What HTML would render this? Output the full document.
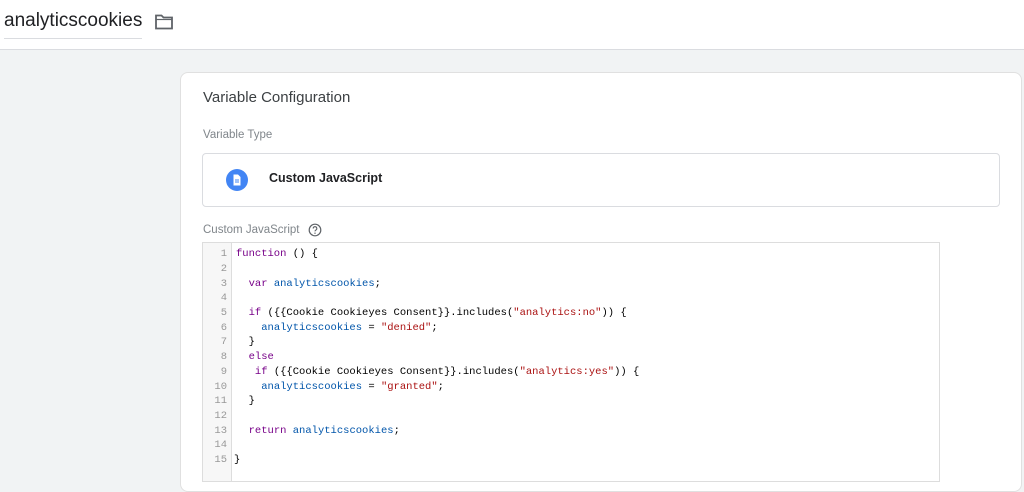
<!DOCTYPE html>
<html><head><style>
*{margin:0;padding:0;box-sizing:border-box}
body{width:1024px;height:468px;overflow:hidden;background:#f1f3f4;font-family:"Liberation Sans",sans-serif;position:relative}
.hdr{position:absolute;left:0;top:0;width:1024px;height:50px;background:#fff;border-bottom:1px solid #dadce0}
.title{position:absolute;left:4px;top:10px;font-size:19px;color:#202124;padding-bottom:6px;border-bottom:1px solid #dadce0;width:138px}
.card{position:absolute;left:180px;top:72px;width:842px;height:420px;background:#fff;border:1px solid #e0e0e0;border-radius:8px}
.ct{position:absolute;left:203px;top:89px;font-size:15px;color:#3c4043}
.lbl{position:absolute;left:203px;font-size:11.5px;color:#80868b}
.tbox{position:absolute;left:202px;top:153px;width:798px;height:54px;border:1px solid #dadce0;border-radius:4px;background:#fff}
.code{position:absolute;left:202px;top:242px;width:738px;height:240px;border:1px solid #ddd;background:#fff;font-family:"Liberation Mono",monospace;font-size:10.5px}
.gut{position:absolute;left:0;top:0;width:29px;height:100%;background:#f7f7f7;border-right:1px solid #ddd}
.ln{position:absolute;left:0;width:24px;text-align:right;color:#999}
.tx{position:absolute;left:33px;white-space:pre;color:#000}
.k{color:#708}.v{color:#05a}.s{color:#a11}
</style></head><body>
<div class="hdr"><div class="title">analyticscookies</div>
<svg style="position:absolute;left:154px;top:13px" width="20" height="18" viewBox="0 0 20 18"><path d="M2 2.5h5.5l2 2H18v11H2z" fill="none" stroke="#5f6368" stroke-width="1.8"/><path d="M2 6.5h16" stroke="#5f6368" stroke-width="1.2"/></svg>
</div>
<div class="card"></div>
<div class="ct">Variable Configuration</div>
<div class="lbl" style="top:129px">Variable Type</div>
<div class="tbox">
<svg style="position:absolute;left:22px;top:14px" width="24" height="24" viewBox="0 0 24 24"><circle cx="12" cy="12" r="11" fill="#4285f4"/><path d="M8.5 6.5h4.5l2.5 2.5v8.5h-7z" fill="#fff"/><path d="M10 12h4M10 14h4" stroke="#4285f4" stroke-width="1"/></svg>
<div style="position:absolute;left:66px;top:17px;font-size:12.5px;font-weight:bold;color:#202124">Custom JavaScript</div>
</div>
<div class="lbl" style="top:224px">Custom JavaScript</div>
<svg style="position:absolute;left:308px;top:223px" width="14" height="14" viewBox="0 0 14 14"><circle cx="7" cy="7" r="5.8" fill="none" stroke="#5f6368" stroke-width="1.2"/><path d="M5.2 5.5a1.8 1.8 0 1 1 2.6 1.6c-.6.3-.8.7-.8 1.3" fill="none" stroke="#5f6368" stroke-width="1.1"/><circle cx="7" cy="10.2" r=".7" fill="#5f6368"/></svg>
<div class="code"><div class="gut"></div>
<div class="ln" style="top:5px">1</div><div class="tx" style="top:5px"><span class="k">function</span> () {</div>
<div class="ln" style="top:20px">2</div>
<div class="ln" style="top:35px">3</div><div class="tx" style="top:35px">  <span class="k">var</span> <span class="v">analyticscookies</span>;</div>
<div class="ln" style="top:49px">4</div>
<div class="ln" style="top:64px">5</div><div class="tx" style="top:64px">  <span class="k">if</span> ({{Cookie Cookieyes Consent}}.includes(<span class="s">"analytics:no"</span>)) {</div>
<div class="ln" style="top:79px">6</div><div class="tx" style="top:79px">    <span class="v">analyticscookies</span> = <span class="s">"denied"</span>;</div>
<div class="ln" style="top:93px">7</div><div class="tx" style="top:93px">  }</div>
<div class="ln" style="top:108px">8</div><div class="tx" style="top:108px">  <span class="k">else</span></div>
<div class="ln" style="top:123px">9</div><div class="tx" style="top:123px">   <span class="k">if</span> ({{Cookie Cookieyes Consent}}.includes(<span class="s">"analytics:yes"</span>)) {</div>
<div class="ln" style="top:138px">10</div><div class="tx" style="top:138px">    <span class="v">analyticscookies</span> = <span class="s">"granted"</span>;</div>
<div class="ln" style="top:152px">11</div><div class="tx" style="top:152px">  }</div>
<div class="ln" style="top:167px">12</div>
<div class="ln" style="top:182px">13</div><div class="tx" style="top:182px">  <span class="k">return</span> <span class="v">analyticscookies</span>;</div>
<div class="ln" style="top:196px">14</div>
<div class="ln" style="top:211px">15</div><div class="tx" style="top:211px;left:31px">}</div>
</div>
</body></html>
